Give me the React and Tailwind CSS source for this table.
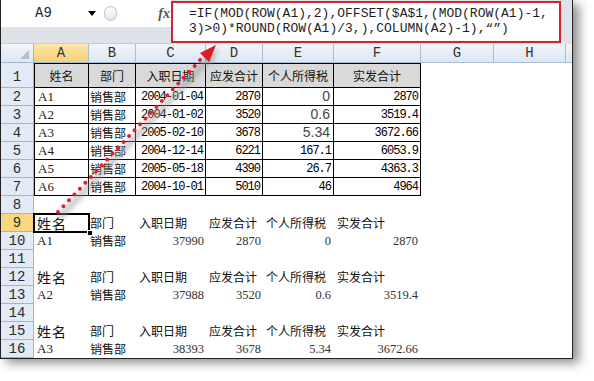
import React from "react";

const MONO = "[font-family:'Liberation_Mono','Noto_Sans_CJK_SC',monospace]";
const SERIF = "[font-family:'Liberation_Serif','Noto_Sans_CJK_SC',serif]";
const CJK = "[font-family:'Noto_Sans_CJK_SC',sans-serif]";
const SANS = "[font-family:'Liberation_Sans',sans-serif]";

const COL_W = ["w-[55px]", "w-[47px]", "w-[70px]", "w-[57px]", "w-[71px]", "w-[87px]", "w-[73px]", "w-[72px]", "w-[7px]"];
const LETTERS = ["A", "B", "C", "D", "E", "F", "G", "H", ""];
const HEAD = ["姓名", "部门", "入职日期", "应发合计", "个人所得税", "实发合计"];

// rows 2..7 of the source table
const TABLE = [
  { name: "A1", date: "2004-01-04", pay: "2870", tax: "0", big: true, net: "2870" },
  { name: "A2", date: "2004-01-02", pay: "3520", tax: "0.6", big: true, net: "3519.4" },
  { name: "A3", date: "2005-02-10", pay: "3678", tax: "5.34", big: true, net: "3672.66" },
  { name: "A4", date: "2004-12-14", pay: "6221", tax: "167.1", net: "6053.9" },
  { name: "A5", date: "2005-05-18", pay: "4390", tax: "26.7", net: "4363.3" },
  { name: "A6", date: "2004-10-01", pay: "5010", tax: "46", net: "4964" },
];

// result rows built by the formula
const RESULT = [
  { n: 9, head: true, active: true },
  { n: 10, name: "A1", serial: "37990", pay: "2870", tax: "0", net: "2870" },
  { n: 11 },
  { n: 12, head: true },
  { n: 13, name: "A2", serial: "37988", pay: "3520", tax: "0.6", net: "3519.4" },
  { n: 14 },
  { n: 15, head: true },
  { n: 16, name: "A3", serial: "38393", pay: "3678", tax: "5.34", net: "3672.66" },
];

function Row({ n, active, tall, children }) {
  return (
    <div className={`flex ${tall ? "h-[25px]" : "h-[18px]"}`}>
      <div
        className={`w-[33px] shrink-0 flex justify-center border-r border-b border-[#9eb6ce] text-[14px] leading-none text-[#2b2b2b] ${MONO} ${
          tall ? "items-end pb-[3px]" : "items-center"
        } ${active ? "bg-[#f8d77e]" : "bg-[#e2eaf5]"}`}
      >
        {n}
      </div>
      {children}
    </div>
  );
}

function Cell({ col, className = "", children }) {
  return (
    <div className={`${COL_W[col]} shrink-0 flex items-center whitespace-nowrap overflow-visible ${className}`}>
      {children}
    </div>
  );
}

function Empty({ from }) {
  return COL_W.slice(from).map((_, i) => <Cell key={i} col={from + i} />);
}

export default function App() {
  const tb = "border-r border-b border-black";
  const num = `justify-end pr-[2px] text-[12px] tracking-[-1px] ${MONO}`;

  return (
    <div className="relative w-[594px] h-[381px] bg-white overflow-hidden">
      <div className="w-[573px] h-[359px] border-r border-b border-l border-[#222] bg-white shadow-[6px_4px_10px_rgba(0,0,0,0.45)] overflow-hidden">
        {/* formula bar */}
        <div className="flex h-[44px] bg-[#dfe4ea]">
          <div className="w-[170px] shrink-0 flex flex-col">
            <div className="h-[27px] bg-white flex items-center">
              <div className={`w-[100px] h-full flex items-center pl-[34px] text-[14px] text-[#222] ${MONO}`}>
                A9
                <span className="ml-auto mr-[5px] w-0 h-0 border-l-[4px] border-r-[4px] border-t-[5px] border-l-transparent border-r-transparent border-t-black" />
              </div>
              <div className="ml-[3px] w-[13px] h-[15px] rounded-full border border-[#b8bec6] bg-gradient-to-b from-white to-[#e3e7ec]" />
              <span className={`ml-auto mr-[1px] italic font-bold text-[14px] text-[#555] ${SERIF}`}>fx</span>
            </div>
            <div className="flex-1 bg-[#dde2e8] border-b border-[#c6ccd4]" />
          </div>
          <div
            className={`w-[390px] h-[42px] mt-[1px] shrink-0 border-2 border-[#d3232d] bg-white pl-[16px] pt-[3px] text-[13px] leading-[15px] text-[#1e1e1e] whitespace-pre ${MONO}`}
          >
            <div>=IF(MOD(ROW(A1),2),OFFSET($A$1,(MOD(ROW(A1)-1,</div>
            <div>3)&gt;0)*ROUND(ROW(A1)/3,),COLUMN(A2)-1),“”)</div>
          </div>
        </div>

        {/* column headers */}
        <div className="flex h-[19px]">
          <div className="w-[33px] shrink-0 flex items-end justify-end pr-[4px] pb-[3px] border-r border-b border-[#9eb6ce] bg-gradient-to-b from-[#f2f5fa] to-[#dde6f2]">
            <svg width="9" height="9" viewBox="0 0 9 9">
              <polygon points="9,0 9,9 0,9" fill="#b4bfcd" />
            </svg>
          </div>
          {LETTERS.map((l, i) => (
            <div
              key={i}
              className={`${COL_W[i]} shrink-0 flex items-center justify-center border-r border-b border-[#a9bdd5] text-[14px] text-[#333] ${MONO} ${
                i === 0 ? "bg-gradient-to-b from-[#fde6a8] to-[#f6d074]" : "bg-gradient-to-b from-[#f2f5fa] to-[#dde6f2]"
              }`}
            >
              {l}
            </div>
          ))}
        </div>

        {/* source table header */}
        <Row n={1} tall>
          {HEAD.map((h, i) => (
            <Cell key={i} col={i} className={`justify-center bg-[#d9d9d9] border-t ${tb} ${i === 0 ? "border-l" : ""} text-[12px] text-[#111] ${CJK}`}>
              {h}
            </Cell>
          ))}
          <Empty from={6} />
        </Row>

        {TABLE.map((r, idx) => (
          <Row key={idx} n={idx + 2}>
            <Cell col={0} className={`${tb} border-l pl-[3px] text-[13px] text-[#222] ${SERIF}`}>{r.name}</Cell>
            <Cell col={1} className={`${tb} pl-[1px] text-[12px] text-[#111] ${CJK}`}>销售部</Cell>
            <Cell col={2} className={`${tb} ${num}`}>{r.date}</Cell>
            <Cell col={3} className={`${tb} ${num}`}>{r.pay}</Cell>
            {r.big ? (
              <Cell col={4} className={`${tb} justify-end pr-[3px] text-[14px] text-[#444] ${SANS}`}>{r.tax}</Cell>
            ) : (
              <Cell col={4} className={`${tb} ${num}`}>{r.tax}</Cell>
            )}
            <Cell col={5} className={`${tb} ${num}`}>{r.net}</Cell>
            <Empty from={6} />
          </Row>
        ))}

        <Row n={8}>
          <Empty from={0} />
        </Row>

        {RESULT.map((r) => (
          <Row key={r.n} n={r.n} active={r.active}>
            {r.head ? (
              <>
                <Cell col={0} className="relative pl-[3px]">
                  <span className={`text-[14px] tracking-[1px] text-[#111] ${CJK}`}>姓名</span>
                  {r.active && (
                    <>
                      <div className="absolute left-[-1px] top-[-1px] right-[-1px] bottom-[-1px] border-2 border-black" />
                      <div className="absolute right-[-4px] bottom-[-4px] w-[6px] h-[6px] bg-black border border-white" />
                    </>
                  )}
                </Cell>
                {HEAD.slice(1).map((h, i) => (
                  <Cell key={i} col={i + 1} className={`${i === 0 ? "pl-[1px]" : "pl-[3px]"} text-[12px] text-[#111] ${CJK}`}>
                    {h}
                  </Cell>
                ))}
                <Empty from={6} />
              </>
            ) : r.name ? (
              <>
                <Cell col={0} className={`pl-[3px] text-[13px] text-[#222] ${SERIF}`}>{r.name}</Cell>
                <Cell col={1} className={`pl-[1px] text-[12px] text-[#111] ${CJK}`}>销售部</Cell>
                <Cell col={2} className={`justify-end pr-[2px] text-[12.5px] text-[#333] ${SERIF}`}>{r.serial}</Cell>
                <Cell col={3} className={`justify-end pr-[2px] text-[12.5px] text-[#333] ${SERIF}`}>{r.pay}</Cell>
                <Cell col={4} className={`justify-end pr-[3px] text-[12.5px] text-[#333] ${SERIF}`}>{r.tax}</Cell>
                <Cell col={5} className={`justify-end pr-[3px] text-[12.5px] text-[#333] ${SERIF}`}>{r.net}</Cell>
                <Empty from={6} />
              </>
            ) : (
              <Empty from={0} />
            )}
          </Row>
        ))}
      </div>

      {/* red dotted arrow pointing to the formula */}
      <svg className="absolute left-0 top-0 pointer-events-none" width="594" height="381">
        <defs>
          <filter id="soft" x="-20%" y="-20%" width="140%" height="140%">
            <feGaussianBlur stdDeviation="2" />
          </filter>
        </defs>
        <line x1="61" y1="216" x2="208" y2="60" stroke="#9a9a9a" strokeOpacity="0.45" strokeWidth="7" strokeLinecap="round" filter="url(#soft)" />
        <polygon points="219,48 203,56 212,65" fill="#888" fillOpacity="0.4" filter="url(#soft)" />
        <line x1="58" y1="212" x2="203" y2="57" stroke="#e0202a" strokeWidth="4" strokeLinecap="round" strokeDasharray="0 8" />
        <polygon points="216,45 200,53 209,62" fill="#d81d25" />
      </svg>
    </div>
  );
}
